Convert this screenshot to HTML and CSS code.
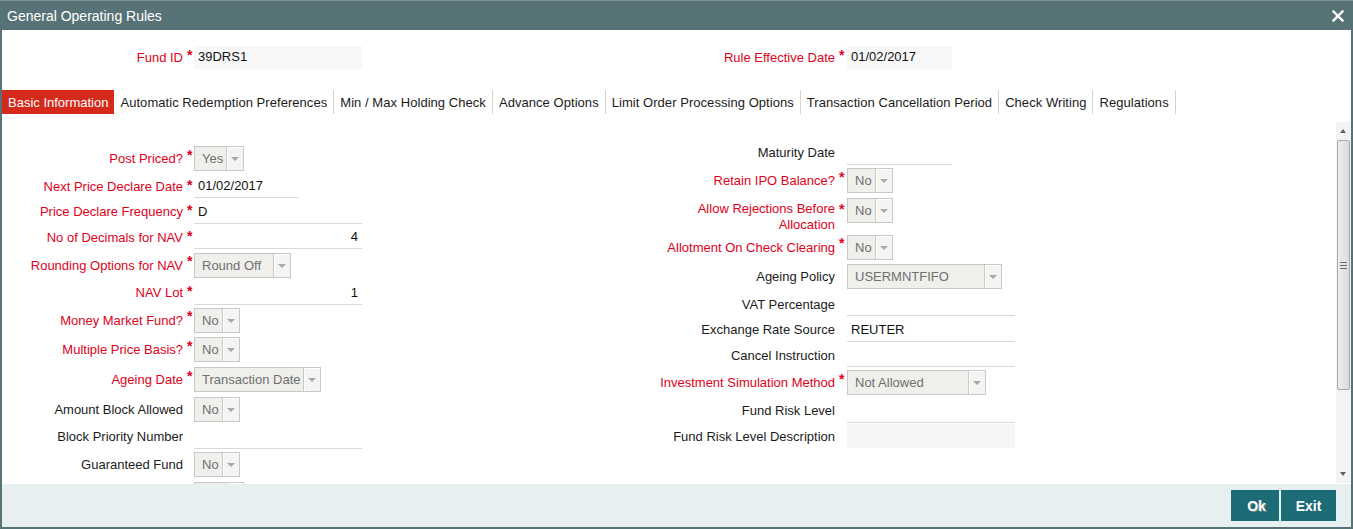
FILE: index.html
```
<!DOCTYPE html>
<html lang="en">
<head>
    <meta charset="UTF-8">
    <meta name="viewport" content="width=device-width, initial-scale=1.0">
    <title>General Operating Rules</title>
    <link rel="stylesheet" href="styles.css">
</head>
<body>
    <div class="window">
        <!-- Title Bar -->
        <div class="titlebar">
            <span class="title">General Operating Rules</span>
            <svg class="close-icon" width="12" height="12" viewBox="0 0 12 12">
                <path d="M1.5 1.5 L10.5 10.5 M10.5 1.5 L1.5 10.5" stroke="#ffffff" stroke-width="2.4" stroke-linecap="square"/>
            </svg>
        </div>

        <div class="main">
            <div class="body">
                <!-- Header Fields -->
                <div class="header-fields">
                    <div class="col col-left">
                        <div class="row">
                            <label class="label req">Fund ID</label>
                            <span class="star">*</span>
                            <div class="head-input head-wide">39DRS1</div>
                        </div>
                    </div>
                    <div class="col col-right">
                        <div class="row">
                            <label class="label req">Rule Effective Date</label>
                            <span class="star">*</span>
                            <div class="head-input head-short">01/02/2017</div>
                        </div>
                    </div>
                </div>

                <!-- Tabs -->
                <div class="tabs">
                    <div class="tab active">Basic Information</div>
                    <div class="tab">Automatic Redemption Preferences</div>
                    <div class="tab">Min / Max Holding Check</div>
                    <div class="tab">Advance Options</div>
                    <div class="tab">Limit Order Processing Options</div>
                    <div class="tab">Transaction Cancellation Period</div>
                    <div class="tab">Check Writing</div>
                    <div class="tab">Regulations</div>
                </div>

                <!-- Tab Content -->
                <div class="content">
                    <div class="form">
                        <div class="col col-left">
                            <div class="row sel-row">
                                <label class="label req">Post Priced?</label>
                                <span class="star">*</span>
                                <div class="select w-50"><span class="select-value">Yes</span><span class="select-arrow"></span></div>
                            </div>
                            <div class="row">
                                <label class="label req">Next Price Declare Date</label>
                                <span class="star">*</span>
                                <div class="field field-short">01/02/2017</div>
                            </div>
                            <div class="row">
                                <label class="label req">Price Declare Frequency</label>
                                <span class="star">*</span>
                                <div class="field field-wide">D</div>
                            </div>
                            <div class="row">
                                <label class="label req">No of Decimals for NAV</label>
                                <span class="star">*</span>
                                <div class="field field-wide field-num">4</div>
                            </div>
                            <div class="row sel-row">
                                <label class="label req">Rounding Options for NAV</label>
                                <span class="star">*</span>
                                <div class="select w-97"><span class="select-value">Round Off</span><span class="select-arrow"></span></div>
                            </div>
                            <div class="row">
                                <label class="label req">NAV Lot</label>
                                <span class="star">*</span>
                                <div class="field field-wide field-num">1</div>
                            </div>
                            <div class="row sel-row">
                                <label class="label req">Money Market Fund?</label>
                                <span class="star">*</span>
                                <div class="select w-46"><span class="select-value">No</span><span class="select-arrow"></span></div>
                            </div>
                            <div class="row sel-row">
                                <label class="label req">Multiple Price Basis?</label>
                                <span class="star">*</span>
                                <div class="select w-46"><span class="select-value">No</span><span class="select-arrow"></span></div>
                            </div>
                            <div class="row sel-row">
                                <label class="label req">Ageing Date</label>
                                <span class="star">*</span>
                                <div class="select w-127"><span class="select-value">Transaction Date</span><span class="select-arrow"></span></div>
                            </div>
                            <div class="row sel-row">
                                <label class="label">Amount Block Allowed</label>
                                <span class="star"></span>
                                <div class="select w-46"><span class="select-value">No</span><span class="select-arrow"></span></div>
                            </div>
                            <div class="row">
                                <label class="label">Block Priority Number</label>
                                <span class="star"></span>
                                <div class="field field-wide"></div>
                            </div>
                            <div class="row sel-row">
                                <label class="label">Guaranteed Fund</label>
                                <span class="star"></span>
                                <div class="select w-46"><span class="select-value">No</span><span class="select-arrow"></span></div>
                            </div>
                            <!-- next row is scrolled out of view, only its top edge shows -->
                            <div class="row sel-row">
                                <label class="label"></label>
                                <span class="star"></span>
                                <div class="select w-50"><span class="select-value"></span><span class="select-arrow"></span></div>
                            </div>
                        </div>

                        <div class="col col-right">
                            <div class="row">
                                <label class="label">Maturity Date</label>
                                <span class="star"></span>
                                <div class="field field-short"></div>
                            </div>
                            <div class="row sel-row">
                                <label class="label req">Retain IPO Balance?</label>
                                <span class="star">*</span>
                                <div class="select w-46"><span class="select-value">No</span><span class="select-arrow"></span></div>
                            </div>
                            <div class="row tall-row">
                                <label class="label req">Allow Rejections Before<br>Allocation</label>
                                <span class="star">*</span>
                                <div class="select w-46"><span class="select-value">No</span><span class="select-arrow"></span></div>
                            </div>
                            <div class="row sel-row">
                                <label class="label req">Allotment On Check Clearing</label>
                                <span class="star">*</span>
                                <div class="select w-46"><span class="select-value">No</span><span class="select-arrow"></span></div>
                            </div>
                            <div class="row sel-row">
                                <label class="label">Ageing Policy</label>
                                <span class="star"></span>
                                <div class="select w-155"><span class="select-value">USERMNTFIFO</span><span class="select-arrow"></span></div>
                            </div>
                            <div class="row">
                                <label class="label">VAT Percentage</label>
                                <span class="star"></span>
                                <div class="field field-wide"></div>
                            </div>
                            <div class="row">
                                <label class="label">Exchange Rate Source</label>
                                <span class="star"></span>
                                <div class="field field-wide">REUTER</div>
                            </div>
                            <div class="row">
                                <label class="label">Cancel Instruction</label>
                                <span class="star"></span>
                                <div class="field field-wide"></div>
                            </div>
                            <div class="row sel-row">
                                <label class="label req">Investment Simulation Method</label>
                                <span class="star">*</span>
                                <div class="select w-139"><span class="select-value">Not Allowed</span><span class="select-arrow"></span></div>
                            </div>
                            <div class="row">
                                <label class="label">Fund Risk Level</label>
                                <span class="star"></span>
                                <div class="field field-wide"></div>
                            </div>
                            <div class="row">
                                <label class="label">Fund Risk Level Description</label>
                                <span class="star"></span>
                                <div class="field field-wide field-shaded"></div>
                            </div>
                        </div>
                    </div>

                    <!-- Scrollbar -->
                    <div class="scrollbar">
                        <div class="scroll-btn"><span class="arrow-up"></span></div>
                        <div class="scroll-thumb"><span class="grip"></span></div>
                        <div class="scroll-track"></div>
                        <div class="scroll-btn"><span class="arrow-down"></span></div>
                    </div>
                </div>
            </div>

            <!-- Footer Buttons -->
            <div class="footer">
                <button class="btn btn-ok">Ok</button>
                <button class="btn btn-exit">Exit</button>
            </div>
        </div>
    </div>
</body>
</html>
```

FILE: styles.css
```
* {
    box-sizing: border-box;
}
body {
    font-family: "Liberation Sans", Arial, sans-serif;
    font-size: 13px;
    margin: 0;
    padding: 0;
    background-color: #ffffff;
    color: #1b1b1b;
}
.window {
    width: 1353px;
    height: 529px;
    display: flex;
    flex-direction: column;
    overflow: hidden;
}
/* Title Bar */
.titlebar {
    height: 30px;
    flex-shrink: 0;
    display: flex;
    align-items: center;
    justify-content: space-between;
    padding: 1px 9px 0 7px;
    background-color: #587377;
    box-shadow: inset 0 1px 0 #7a9195;
}
.title {
    color: #ffffff;
    font-size: 14px;
}
.close-icon {
    display: block;
}
.main {
    flex: 1;
    min-height: 0;
    display: flex;
    flex-direction: column;
    border: 2px solid #587377;
    border-top: none;
}
.body {
    flex: 1;
    display: flex;
    flex-direction: column;
    min-height: 0;
}
/* Field grid shared by header and tab content */
.header-fields {
    display: flex;
    padding-top: 16px;
}
.col {
    display: flex;
    flex-direction: column;
}
.col-left {
    width: 650px;
    flex-shrink: 0;
}
.col-right {
    flex: 1;
}
.row {
    display: flex;
    align-items: center;
    height: 25.5px;
    flex-shrink: 0;
}
.sel-row {
    height: 29.7px;
}
.tall-row {
    height: 37px;
    align-items: flex-start;
}
.tall-row .label {
    padding-top: 5.5px;
    line-height: 16px;
}
.tall-row .star {
    padding-top: 5.5px;
    line-height: 16px;
}
.tall-row .select {
    margin-top: 2.5px;
}
.label {
    width: 181px;
    text-align: right;
    white-space: nowrap;
}
.col-right .label {
    width: 183px;
}
.label.req {
    color: #e2001a;
}
.star {
    width: 11px;
    padding-left: 4px;
    color: #e2001a;
    font-weight: bold;
    font-size: 14px;
    align-self: flex-start;
    line-height: 22px;
}
.col-right .star {
    width: 12px;
    padding-left: 4px;
}
.tall-row .star,
.header-fields .star {
    align-self: auto;
}
.header-fields .row {
    height: 23px;
}
.header-fields .star {
    line-height: 16px;
    margin-top: -6px;
}
.head-input {
    height: 23px;
    line-height: 22px;
    padding-left: 4px;
    background-color: #f7f7f7;
    color: #111111;
}
.head-wide {
    width: 168px;
}
.head-short {
    width: 105px;
}
/* Tabs */
.tabs {
    display: flex;
    height: 24px;
    margin-top: 21px;
    flex-shrink: 0;
}
.tab {
    padding: 0 6px;
    line-height: 25px;
    color: #1b1b1b;
    border-right: 1px solid #d4d4d4;
    white-space: nowrap;
    letter-spacing: 0.05px;
}
.tab.active {
    background-color: #d4291b;
    color: #ffffff;
    border-right: none;
    letter-spacing: 0;
}
/* Tab Content */
.content {
    flex: 1;
    display: flex;
    min-height: 0;
    overflow: hidden;
}
.form {
    flex: 1;
    display: flex;
    overflow: hidden;
}
.form .col-left {
    padding-top: 30px;
}
.form .col-right {
    padding-top: 26px;
}
.field {
    height: 24px;
    line-height: 23px;
    padding: 0 4px;
    border-bottom: 1px solid #d9d9d9;
    color: #111111;
    white-space: nowrap;
}
.field-short {
    width: 105px;
}
.field-wide {
    width: 168px;
}
.field-num {
    text-align: right;
}
.field-shaded {
    background-color: #f5f5f5;
    border-bottom: none;
}
/* Dropdowns */
.select {
    display: flex;
    height: 25px;
    border: 1px solid #c8c8c8;
    background-color: #efefeb;
    color: #707070;
}
.select-value {
    flex: 1;
    padding-left: 7px;
    line-height: 23px;
    white-space: nowrap;
    overflow: hidden;
}
.select-arrow {
    width: 17px;
    flex-shrink: 0;
    position: relative;
    background-color: #f4f4f2;
    border-left: 1px solid #c8c8c8;
    box-shadow: inset 1px 1px 0 #ffffff;
}
.select-arrow::after {
    content: "";
    position: absolute;
    left: 4px;
    top: 10px;
    border-left: 4px solid transparent;
    border-right: 4px solid transparent;
    border-top: 4px solid #a8a8a8;
}
.w-46 { width: 46px; }
.w-50 { width: 50px; }
.w-97 { width: 97px; }
.w-127 { width: 127px; }
.w-139 { width: 139px; }
.w-155 { width: 155px; }
/* Scrollbar */
.scrollbar {
    width: 15px;
    flex-shrink: 0;
    display: flex;
    flex-direction: column;
    margin: 8px 0 1px;
    background-color: #f3f3f3;
}
.scroll-btn {
    height: 18px;
    flex-shrink: 0;
    position: relative;
}
.arrow-up,
.arrow-down {
    position: absolute;
    left: 4px;
    border-left: 3.5px solid transparent;
    border-right: 3.5px solid transparent;
}
.arrow-up {
    top: 7px;
    border-bottom: 4px solid #5e5e5e;
}
.arrow-down {
    top: 7px;
    border-top: 4px solid #5e5e5e;
}
.scroll-thumb {
    height: 250px;
    flex-shrink: 0;
    margin: 0 1px;
    border: 1px solid #a9a9a9;
    border-radius: 2px;
    background: linear-gradient(to right, #ececec, #dcdcdc);
    display: flex;
    align-items: center;
    justify-content: center;
}
.grip {
    width: 7px;
    height: 7px;
    border-top: 1px solid #6a6a6a;
    border-bottom: 1px solid #6a6a6a;
    background: linear-gradient(#6a6a6a, #6a6a6a) center / 100% 1px no-repeat;
}
.scroll-track {
    flex: 1;
}
/* Footer Buttons */
.footer {
    height: 43px;
    flex-shrink: 0;
    display: flex;
    justify-content: flex-end;
    align-items: flex-start;
    gap: 2px;
    padding: 6px 15px 0 0;
    background-color: #e7eff1;
}
.btn {
    height: 31px;
    border: none;
    color: #ffffff;
    background-color: #1c6c78;
    font-family: "Liberation Sans", Arial, sans-serif;
    font-size: 14px;
    font-weight: bold;
    padding: 0;
    cursor: pointer;
}
.btn-ok {
    width: 48px;
    padding-left: 3px;
    text-shadow: 1px 1px 0 #7c8a8c;
}
.btn-exit {
    width: 55px;
}
```
